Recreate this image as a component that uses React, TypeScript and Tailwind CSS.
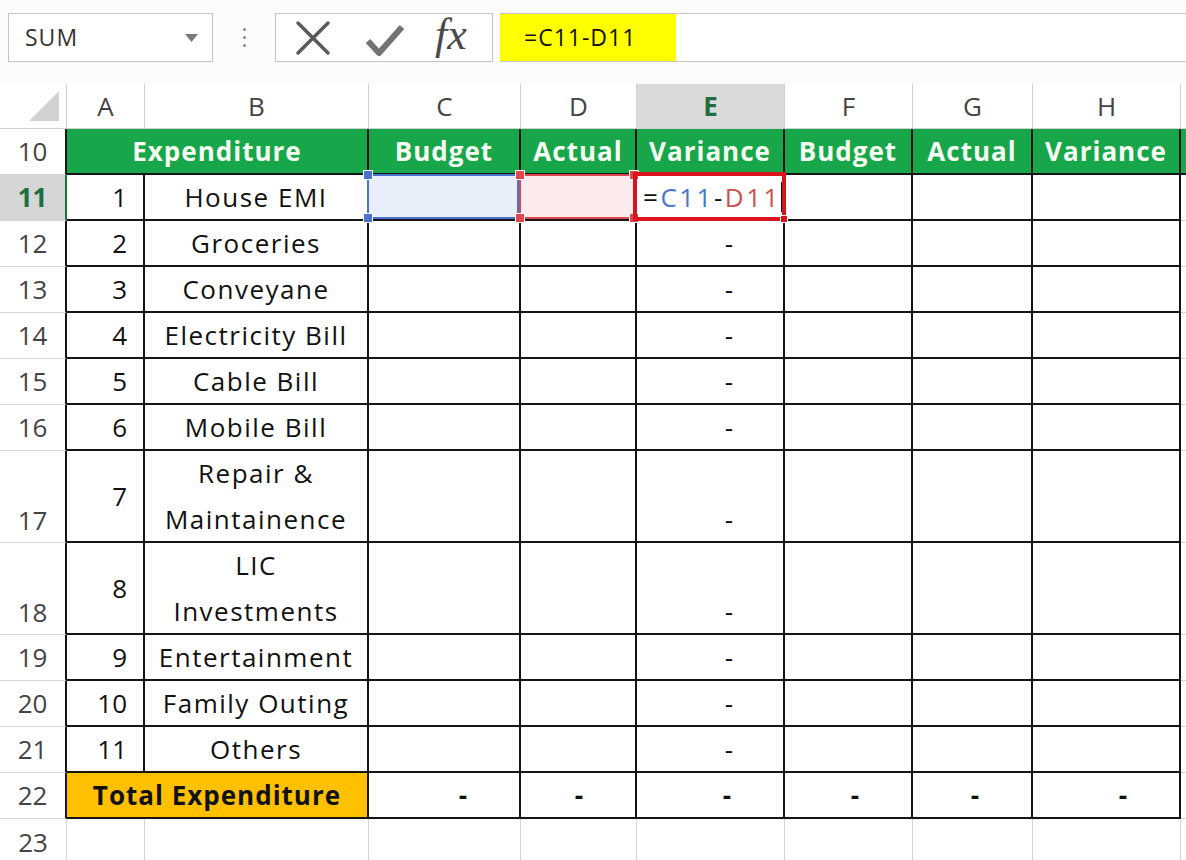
import { Fragment } from "react";
import clsx from "clsx";

const rows = [
  { r: 11, n: "1", name: ["House EMI"] },
  { r: 12, n: "2", name: ["Groceries"] },
  { r: 13, n: "3", name: ["Conveyane"] },
  { r: 14, n: "4", name: ["Electricity Bill"] },
  { r: 15, n: "5", name: ["Cable Bill"] },
  { r: 16, n: "6", name: ["Mobile Bill"] },
  { r: 17, n: "7", name: ["Repair &", "Maintainence"] },
  { r: 18, n: "8", name: ["LIC", "Investments"] },
  { r: 19, n: "9", name: ["Entertainment"] },
  { r: 20, n: "10", name: ["Family Outing"] },
  { r: 21, n: "11", name: ["Others"] },
];

const letters = ["A", "B", "C", "D", "E", "F", "G", "H", ""];

// black table border on every data cell
const tc = "border-r-2 border-b-2 border-[#151515]";

const Handle = ({ pos, color }: { pos: string; color: string }) => (
  <div className={clsx("absolute w-[10px] h-[10px] border border-white", pos, color)} />
);

const Toolbar = () => (
  <div className="h-[84px] flex items-start pt-[13px] bg-[#fbfbfc]">
    {/* name box */}
    <div className="ml-[8px] w-[205px] h-[49px] border border-[#c4c4c4] bg-white flex items-center justify-between pl-[16px] pr-[14px]">
      <span className="text-[23px] tracking-[1px] text-[#333]">SUM</span>
      <svg width="13" height="8" viewBox="0 0 13 8">
        <polygon points="0,0 13,0 6.5,8" fill="#7a7a7a" />
      </svg>
    </div>
    <div className="w-[62px] h-[49px] flex flex-col items-center justify-center gap-[5px]">
      <div className="w-[3px] h-[3px] rounded-full bg-[#8a8a8a]" />
      <div className="w-[3px] h-[3px] rounded-full bg-[#8a8a8a]" />
      <div className="w-[3px] h-[3px] rounded-full bg-[#8a8a8a]" />
    </div>
    {/* cancel / enter / fx */}
    <div className="w-[218px] h-[49px] border border-[#c4c4c4] bg-white flex items-center pl-[19px]">
      <svg width="36" height="36" viewBox="0 0 36 36">
        <path d="M3 3 L33 33 M33 3 L3 33" stroke="#5a5a5a" strokeWidth="3.5" strokeLinecap="round" fill="none" />
      </svg>
      <svg width="40" height="34" viewBox="0 0 40 34" className="ml-[34px] mt-[4px]">
        <path d="M3 18 L14 30 L37 4" stroke="#737373" strokeWidth="6" strokeLinejoin="round" fill="none" />
      </svg>
      <span className="ml-[30px] font-['Liberation_Serif',serif] italic text-[44px] leading-none text-[#4a4a4a] -mt-[6px]">
        fx
      </span>
    </div>
    {/* formula input */}
    <div className="ml-[7px] flex-1 h-[49px] border-y border-[#c4c4c4] bg-white flex">
      <div className="w-[176px] h-full bg-[#ffff00] flex items-center pl-[24px] text-[23px] tracking-[1px] text-[#111]">
        =C11-D11
      </div>
    </div>
  </div>
);

const Sheet = () => (
  <div className="w-full overflow-hidden">
    <div className="grid w-[1301px] grid-cols-[67px_78px_224px_152px_116px_148px_128px_120px_148px_120px] text-[26px] text-[#111]">
      {/* column headers */}
      <div className="h-[45px] border-r border-b border-[#d0d0d0] flex items-end justify-end pr-[7px] pb-[7px]">
        <svg width="30" height="30" viewBox="0 0 30 30">
          <polygon points="30,0 30,30 0,30" fill="#d2d2d2" />
        </svg>
      </div>
      {letters.map((l, i) => (
        <div
          key={i}
          className={clsx(
            "h-[45px] border-r border-b border-[#d0d0d0] flex items-center justify-center",
            l === "E" ? "bg-[#dadada] font-bold text-[#1e6e42]" : "text-[#444]"
          )}
        >
          {l}
        </div>
      ))}

      {/* row 10 - green heading */}
      <div className="h-[46px] border-r-2 border-r-[#151515] border-b border-b-[#d4d4d4] flex items-center justify-center text-[#444]">
        10
      </div>
      {["Expenditure", "Budget", "Actual", "Variance", "Budget", "Actual", "Variance"].map((t, i) => (
        <div
          key={i}
          className={clsx(
            tc,
            "h-[46px] bg-[#17a64a] flex items-center justify-center font-bold text-[#f6fff2] tracking-[1px]",
            i === 0 && "col-span-2"
          )}
        >
          {t}
        </div>
      ))}
      <div className="h-[46px] bg-[#17a64a] border-b-2 border-[#151515]" />

      {/* items */}
      {rows.map((row) => {
        const tall = row.name.length > 1;
        const h = tall ? "h-[92px]" : "h-[46px]";
        const sel = row.r === 11;
        return (
          <Fragment key={row.r}>
            <div
              className={clsx(
                h,
                "flex justify-center border-b border-b-[#d4d4d4] border-r-2",
                tall ? "items-end leading-[44px]" : "items-center",
                sel ? "bg-[#d6d6d6] border-r-[#1e6e42] font-bold text-[#1e6e42]" : "border-r-[#151515] text-[#444]"
              )}
            >
              {row.r}
            </div>
            <div className={clsx(tc, h, "flex items-center justify-end pr-[16px]")}>{row.n}</div>
            <div className={clsx(tc, h, "flex flex-col items-center justify-center tracking-[1.5px]")}>
              {row.name.map((t) => (
                <span key={t} className={tall ? "leading-[46px]" : ""}>
                  {t}
                </span>
              ))}
            </div>
            {sel ? (
              <>
                <div className={clsx(tc, h, "relative bg-[#e8eefa]")}>
                  <div className="absolute -left-[2px] -top-[1px] right-0 bottom-0 border-2 border-[#4a74cc] z-10">
                    <Handle pos="-left-[6px] -top-[6px]" color="bg-[#4a74cc]" />
                    <Handle pos="-left-[6px] -bottom-[6px]" color="bg-[#4a74cc]" />
                  </div>
                </div>
                <div className={clsx(tc, h, "relative bg-[#fcebec]")}>
                  <div className="absolute -left-[2px] -top-[1px] right-0 bottom-0 border-2 border-[#e0464e] z-10">
                    <Handle pos="-left-[6px] -top-[6px]" color="bg-[#e0464e]" />
                    <Handle pos="-left-[6px] -bottom-[6px]" color="bg-[#e0464e]" />
                    <Handle pos="-right-[6px] -top-[6px]" color="bg-[#e0464e]" />
                    <Handle pos="-right-[6px] -bottom-[6px]" color="bg-[#e0464e]" />
                  </div>
                </div>
                <div className={clsx(tc, h, "relative flex items-center pl-[6px] tracking-[2.5px]")}>
                  <span>
                    =<span className="text-[#4a74cc]">C11</span>-<span className="text-[#c8524f]">D11</span>
                  </span>
                  <div className="w-[1px] h-[30px] bg-[#111]" />
                  <div className="absolute -left-[4px] -top-[3px] -right-[3px] -bottom-[2px] border-4 border-[#d9141d] z-20">
                    <div className="absolute -right-[6px] -bottom-[6px] w-[8px] h-[8px] bg-[#d9141d] border border-white" />
                  </div>
                </div>
              </>
            ) : (
              <>
                <div className={clsx(tc, h)} />
                <div className={clsx(tc, h)} />
                <div className={clsx(tc, h, "flex justify-end pr-[50px]", tall ? "items-end leading-[44px]" : "items-center")}>
                  -
                </div>
              </>
            )}
            <div className={clsx(tc, h)} />
            <div className={clsx(tc, h)} />
            <div className={clsx(tc, h)} />
            <div className={clsx(h, "border-b border-[#d4d4d4]")} />
          </Fragment>
        );
      })}

      {/* row 22 - totals */}
      <div className="h-[46px] border-r-2 border-r-[#151515] border-b border-b-[#d4d4d4] flex items-center justify-center text-[#444]">
        22
      </div>
      <div className={clsx(tc, "col-span-2 h-[46px] bg-[#ffc000] flex items-center justify-center font-bold tracking-[1px]")}>
        Total Expenditure
      </div>
      {[0, 1, 2, 3, 4, 5].map((i) => (
        <div key={i} className={clsx(tc, "h-[46px] flex items-center justify-end pr-[52px] font-bold")}>
          -
        </div>
      ))}
      <div className="h-[46px] border-b border-[#d4d4d4]" />

      {/* row 23 - empty */}
      <div className="h-[46px] border-r border-[#d4d4d4] flex items-center justify-center text-[#444]">23</div>
      {letters.map((l, i) => (
        <div key={i} className="h-[46px] border-r border-[#d4d4d4]" />
      ))}
    </div>
  </div>
);

export default function App() {
  return (
    <div className="w-[1186px] h-[860px] overflow-hidden bg-white font-['Open_Sans',sans-serif]">
      <Toolbar />
      <Sheet />
    </div>
  );
}
